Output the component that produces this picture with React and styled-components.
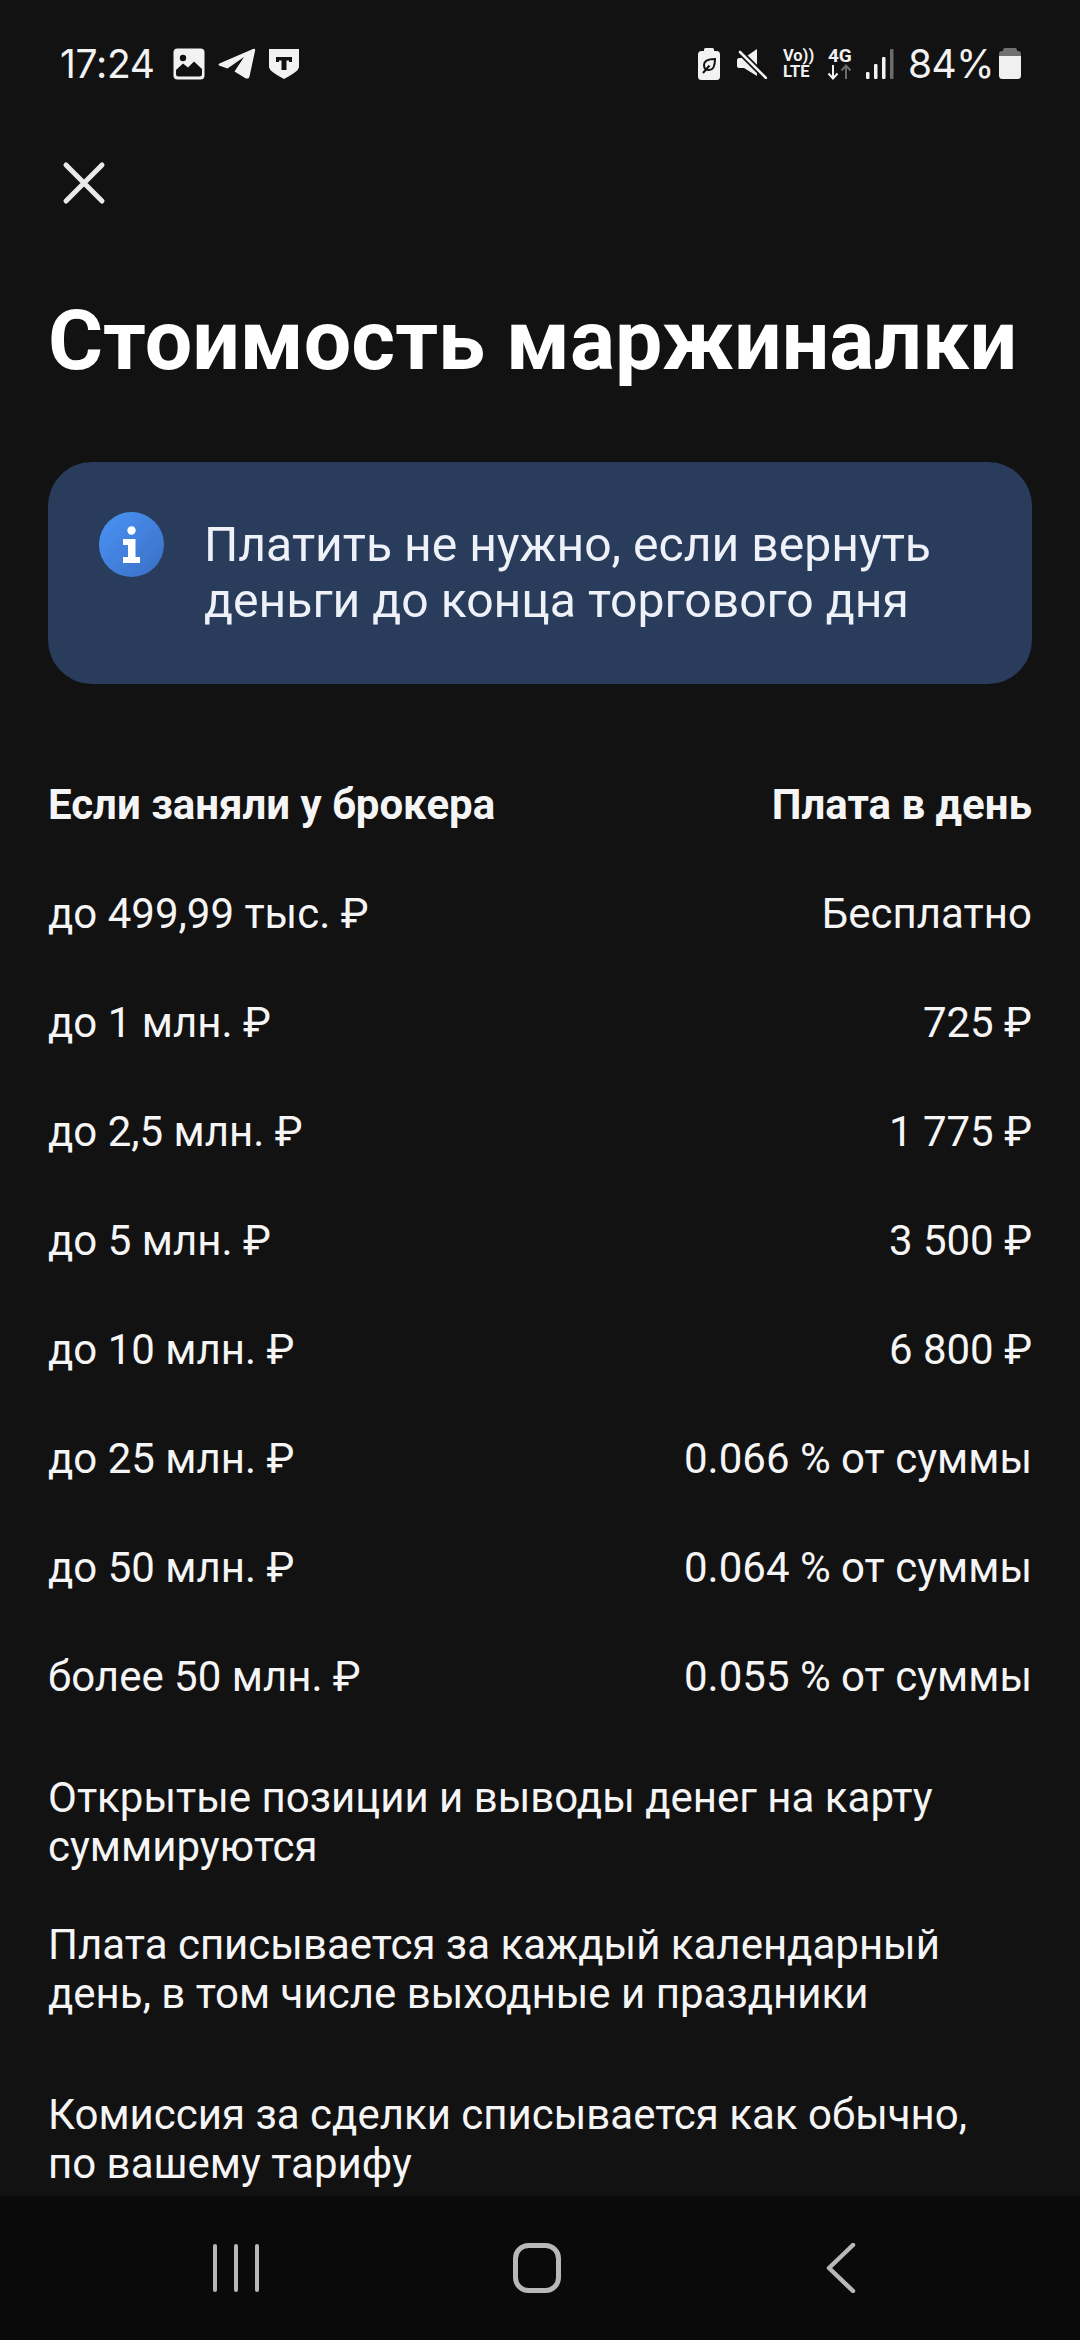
import React from "react";
import styled, { createGlobalStyle } from "styled-components";

const Global = createGlobalStyle`
  html, body { margin: 0; padding: 0; background: #121212; }
  * { box-sizing: border-box; }
`;
const Page = styled.div`
  width: 1080px; height: 2340px; display: flex; flex-direction: column;
  background: #121212; color: #f5f5f6; overflow: hidden;
  font-family: Roboto, "Noto Sans", sans-serif;
`;
const StatusBar = styled.div`
  height: 128px; flex: none; display: flex; align-items: center; justify-content: space-between;
  padding: 0 59px 1px 60px; font-family: Inter, Roboto, sans-serif; color: #f2f2f2;
`;
const StatusGroup = styled.div`
  display: flex; align-items: center;
`;
const StatusItem = styled.div`
  display: flex; align-items: center; margin-left: ${p => p.$ml || 0}px;
`;
const Clock = styled.span`
  font-size: 39px; font-weight: 400; letter-spacing: -0.3px;
`;
const Percent = styled.span`
  font-size: 39px; font-weight: 400; letter-spacing: -0.5px;
`;
const Content = styled.main`
  flex: 1; min-height: 0; overflow: hidden; padding: 0 48px;
  display: flex; flex-direction: column;
`;
const CloseButton = styled.div`
  width: 44px; height: 44px; margin: 33px 0 0 14px; flex: none;
`;
const Title = styled.h1`
  margin: 88px 0 0; font-size: 84.2px; line-height: 96px; font-weight: 700; color: #fff;
  white-space: nowrap;
`;
const Banner = styled.section`
  margin-top: 73px; height: 222px; border-radius: 44px; background: #293c5c;
  display: flex; align-items: center; padding: 0 48px 0 51px;
  gap: 40px;
`;
const InfoCircle = styled.div`
  width: 65px; height: 65px; border-radius: 50%; flex: none; margin-top: -57px;
  background: linear-gradient(135deg, #4a93f5, #3a6fc4);
  display: flex; align-items: center; justify-content: center;
`;
const BannerText = styled.p`
  margin: 0; font-size: 48.1px; line-height: 56px; color: #eef2f8; white-space: nowrap;
`;
const Table = styled.div`
  margin-top: 66px; display: flex; flex-direction: column;
`;
const Row = styled.div`
  height: 109px; display: flex; align-items: center; justify-content: space-between;
  font-size: 42px; font-weight: ${p => (p.$head ? 700 : 400)}; color: #f5f5f6;
`;
const Notes = styled.div`
  margin-top: 42px; display: flex; flex-direction: column;
`;
const Note = styled.p`
  margin: ${p => p.$top}px 0 0; font-size: 42px; line-height: 49px; color: #f5f5f6; white-space: nowrap;
`;
const NavBar = styled.nav`
  height: 144px; flex: none; background: #0a0a0a; display: flex; align-items: center;
`;
const NavSlot = styled.div`
  display: flex; align-items: center; justify-content: center;
  flex: none; width: ${p => p.$w}px; margin-left: ${p => p.$ml}px; height: 60px;
`;

const Picture = () => (
  <svg width="32" height="32" viewBox="0 0 32 32">
    <rect width="31" height="31" x="0.5" y="0.5" rx="4" fill="#f2f2f2" />
    <circle cx="10" cy="10" r="3.2" fill="#121212" />
    <path d="M3 22 L10 15.500 L15 19.500 L21 13.500 L29 21 V26 a2.500 2.500 0 0 1-2.500 2.500 H5.500 A2.500 2.500 0 0 1 3 26 Z" fill="#121212" />
  </svg>
);
const Telegram = () => (
  <svg width="38" height="32" viewBox="0 0 38 32">
    <path d="M1 17.500 C0 16.500 1 15.500 2.500 15 L35 1 C37 0.500 37.500 1.500 37 3 L31.500 28.500 C31 31 28.500 31 27 30 L16.500 23.500 L26 9 L9.500 20.500 Z" fill="#f2f2f2" />
  </svg>
);
const Shield = () => (
  <svg width="30" height="30" viewBox="0 0 30 30">
    <path d="M0 0 H30 V17 C30 21 27 23.500 15 30 C3 23.500 0 21 0 17 Z" fill="#f2f2f2" />
    <path d="M7 8 H23 V13 H20 V11.500 H17.500 V21 H12.500 V11.500 H10 V13 H7 Z" fill="#121212" />
  </svg>
);
const LeafBattery = () => (
  <svg width="22" height="32" viewBox="0 0 22 32">
    <rect x="6" y="0" width="10" height="5" rx="1.500" fill="#f2f2f2" />
    <rect x="0" y="3" width="22" height="29" rx="3.500" fill="#f2f2f2" />
    <path d="M17 11 C10 11 6 13 6 17 C6 20 8 22 11 22 C15 22 17 18 17 11 Z M5 25 L11.500 17.500" stroke="#121212" strokeWidth="2" fill="none" />
  </svg>
);
const Mute = () => (
  <svg width="30" height="30" viewBox="0 0 30 30">
    <path d="M0 11 C0 10 1 9 2 9 H7 L20 0 V27 L7 19 H2 C1 19 0 18 0 17 Z" fill="#f2f2f2" />
    <path d="M1 1 L29 29" stroke="#121212" strokeWidth="6" />
    <path d="M3 3 L29 29" stroke="#f2f2f2" strokeWidth="2.600" strokeLinecap="round" />
  </svg>
);
const Volte = styled.div`
  display: flex; flex-direction: column; align-items: flex-start; width: 31px;
  font: 700 16.500px/16px Roboto, sans-serif; color: #f0f0f0; white-space: nowrap;
`;
const Net = () => (
  <svg width="26" height="16" viewBox="0 0 26 16">
    <path d="M6 1 V14 M1.500 9.500 L6 14.500 L10.500 9.500" stroke="#f2f2f2" strokeWidth="2" fill="none" />
    <path d="M19 15 V2 M14.500 6.500 L19 1.500 L23.500 6.500" stroke="#6b6b6b" strokeWidth="2" fill="none" />
  </svg>
);
const Net4G = styled.div`
  display: flex; flex-direction: column; align-items: center; width: 26px;
  font: 700 19px/17px Roboto, sans-serif; color: #f0f0f0;
`;
const Signal = () => (
  <svg width="28" height="30" viewBox="0 0 28 30">
    <rect x="0" y="23" width="3.500" height="7" rx="1" fill="#f2f2f2" />
    <rect x="8" y="15" width="3.500" height="15" rx="1" fill="#f2f2f2" />
    <rect x="16" y="8" width="3.500" height="22" rx="1" fill="#f2f2f2" />
    <rect x="24" y="0" width="3.500" height="30" rx="1" fill="#6b6b6b" />
  </svg>
);
const Battery = () => (
  <svg width="22" height="31" viewBox="0 0 22 31">
    <path d="M6 0 H16 A2 2 0 0 1 18 2 V3 H19 A3 3 0 0 1 22 6 V8 H0 V6 A3 3 0 0 1 3 3 H4 V2 A2 2 0 0 1 6 0 Z" fill="#6f6f6f" />
    <path d="M0 8 H22 V27.500 A3.500 3.500 0 0 1 18.500 31 H3.500 A3.500 3.500 0 0 1 0 27.500 Z" fill="#f0f0f0" />
  </svg>
);

const rows = [
  ["до 499,99 тыс. ₽", "Бесплатно"],
  ["до 1 млн. ₽", "725 ₽"],
  ["до 2,5 млн. ₽", "1 775 ₽"],
  ["до 5 млн. ₽", "3 500 ₽"],
  ["до 10 млн. ₽", "6 800 ₽"],
  ["до 25 млн. ₽", "0.066 % от суммы"],
  ["до 50 млн. ₽", "0.064 % от суммы"],
  ["более 50 млн. ₽", "0.055 % от суммы"],
];

export default function App() {
  return (
    <Page>
      <Global />
      <StatusBar>
        <StatusGroup>
          <Clock>17:24</Clock>
          <StatusItem $ml={18}><Picture /></StatusItem>
          <StatusItem $ml={13}><Telegram /></StatusItem>
          <StatusItem $ml={13}><Shield /></StatusItem>
        </StatusGroup>
        <StatusGroup>
          <StatusItem><LeafBattery /></StatusItem>
          <StatusItem $ml={17}><Mute /></StatusItem>
          <StatusItem $ml={16}><Volte><span>Vo))</span><span>LTE</span></Volte></StatusItem>
          <StatusItem $ml={13}><Net4G><span>4G</span><Net /></Net4G></StatusItem>
          <StatusItem $ml={13}><Signal /></StatusItem>
          <StatusItem $ml={14}><Percent>84%</Percent></StatusItem>
          <StatusItem $ml={5}><Battery /></StatusItem>
        </StatusGroup>
      </StatusBar>
      <Content>
        <CloseButton>
          <svg width="44" height="44" viewBox="0 0 44 44">
            <path d="M4 4 L40 40 M40 4 L4 40" stroke="#eaeaea" strokeWidth="5" strokeLinecap="round" />
          </svg>
        </CloseButton>
        <Title>Стоимость маржиналки</Title>
        <Banner>
          <InfoCircle>
            <svg width="20" height="38" viewBox="0 0 20 38">
              <circle cx="9.500" cy="4.500" r="4.200" fill="#fff" />
              <path d="M1 13 H13.500 V31 H18 V37 H1 V31 H6 V19 H1 Z" fill="#fff" />
            </svg>
          </InfoCircle>
          <BannerText>Платить не нужно, если вернуть<br />деньги до конца торгового дня</BannerText>
        </Banner>
        <Table>
          <Row $head><span>Если заняли у брокера</span><span>Плата в день</span></Row>
          {rows.map(([a, b]) => (
            <Row key={a}><span>{a}</span><span>{b}</span></Row>
          ))}
        </Table>
        <Notes>
          <Note $top={0}>Открытые позиции и выводы денег на карту<br />суммируются</Note>
          <Note $top={49}>Плата списывается за каждый календарный<br />день, в том числе выходные и праздники</Note>
          <Note $top={72}>Комиссия за сделки списывается как обычно,<br />по вашему тарифу</Note>
        </Notes>
      </Content>
      <NavBar>
        <NavSlot $w={46} $ml={213}>
          <svg width="46" height="48" viewBox="0 0 46 48">
            <path d="M2 2 V46 M23 2 V46 M44 2 V46" stroke="#b8b8b8" strokeWidth="4" strokeLinecap="round" />
          </svg>
        </NavSlot>
        <NavSlot $w={48} $ml={254}>
          <svg width="48" height="50" viewBox="0 0 48 50">
            <rect x="2.500" y="2.500" width="43" height="45" rx="13" stroke="#b8b8b8" strokeWidth="5" fill="none" />
          </svg>
        </NavSlot>
        <NavSlot $w={30} $ml={265}>
          <svg width="30" height="50" viewBox="0 0 30 50">
            <path d="M27 2 L3 25 L27 48" stroke="#b8b8b8" strokeWidth="4.500" strokeLinecap="round" strokeLinejoin="round" fill="none" />
          </svg>
        </NavSlot>
      </NavBar>
    </Page>
  );
}
